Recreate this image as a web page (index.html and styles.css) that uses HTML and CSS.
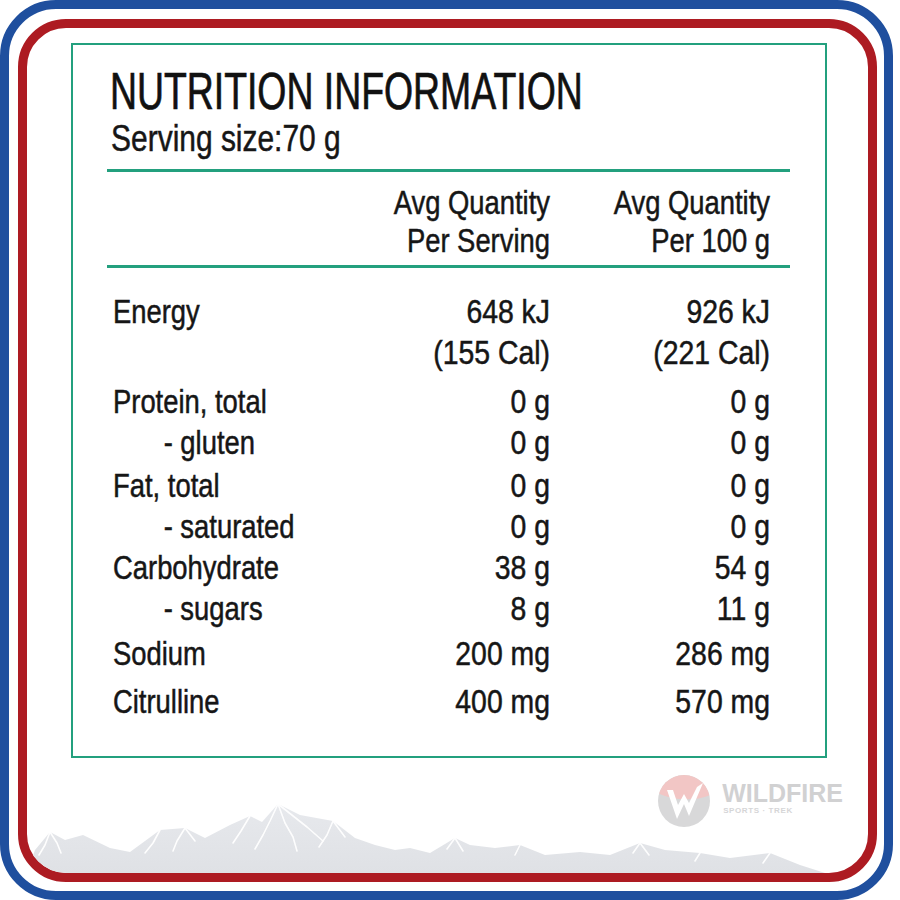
FILE: index.html
```html
<!DOCTYPE html>
<html lang="en">
<head>
<meta charset="utf-8">
<title>Nutrition Information</title>
<link rel="stylesheet" href="styles.css">
</head>
<body>
<div class="frame-blue">
  <div class="frame-red">
    <svg class="mountains" viewBox="0 0 841 80" preserveAspectRatio="none" aria-hidden="true">
      <defs>
        <linearGradient id="mg" x1="0" y1="0" x2="0" y2="1">
          <stop offset="0" stop-color="#e7e9ed"/>
          <stop offset="1" stop-color="#dfe1e5"/>
        </linearGradient>
      </defs>
      <path fill="url(#mg)" d="M0 80 L8 57 L23 39 L38 47 L56 42 L83 55 L103 59 L133 37 L158 35 L178 45 L203 32 L223 23 L235 29 L251 11 L273 22 L306 28 L328 45 L348 52 L368 57 L383 55 L403 60 L428 45 L443 52 L468 55 L493 52 L518 62 L553 59 L583 62 L613 50 L638 57 L673 60 L703 65 L743 60 L773 72 L798 80 Z"/>
      <g fill="none" stroke="#ffffff" stroke-width="1.6" stroke-linecap="round" stroke-linejoin="round" opacity="0.95">
        <path d="M23 39 L18 52 L12 62"/>
        <path d="M23 39 L30 50 L34 60"/>
        <path d="M133 37 L126 50 L118 60"/>
        <path d="M158 35 L150 48 L146 58"/>
        <path d="M158 35 L168 48"/>
        <path d="M223 23 L214 38 L206 50"/>
        <path d="M251 11 L243 28 L236 42 L228 56"/>
        <path d="M251 11 L258 30 L266 44 L270 58"/>
        <path d="M251 11 L280 34 L296 48"/>
        <path d="M306 28 L300 42 L292 54"/>
        <path d="M306 28 L318 44"/>
        <path d="M428 45 L420 56"/>
        <path d="M428 45 L436 58"/>
        <path d="M493 52 L488 62"/>
        <path d="M613 50 L606 60"/>
        <path d="M613 50 L622 62"/>
        <path d="M673 60 L668 68"/>
        <path d="M743 60 L736 70"/>
      </g>
    </svg>

    <section class="panel">
      <h1 class="title">NUTRITION INFORMATION</h1>
      <p class="serving">Serving size:70 g</p>

      <div class="table-head">
        <div></div>
        <div class="col-head">Avg Quantity<br>Per Serving</div>
        <div class="col-head">Avg Quantity<br>Per 100 g</div>
      </div>

      <div class="table-body">
        <div class="row">
          <div class="label">Energy</div>
          <div class="val">648 kJ<br>(155 Cal)</div>
          <div class="val">926 kJ<br>(221 Cal)</div>
        </div>
        <div class="row gap-8">
          <div class="label">Protein, total</div>
          <div class="val">0 g</div>
          <div class="val">0 g</div>
        </div>
        <div class="row">
          <div class="label sub">- gluten</div>
          <div class="val">0 g</div>
          <div class="val">0 g</div>
        </div>
        <div class="row gap-2">
          <div class="label">Fat, total</div>
          <div class="val">0 g</div>
          <div class="val">0 g</div>
        </div>
        <div class="row">
          <div class="label sub">- saturated</div>
          <div class="val">0 g</div>
          <div class="val">0 g</div>
        </div>
        <div class="row">
          <div class="label">Carbohydrate</div>
          <div class="val">38 g</div>
          <div class="val">54 g</div>
        </div>
        <div class="row">
          <div class="label sub">- sugars</div>
          <div class="val">8 g</div>
          <div class="val">11 g</div>
        </div>
        <div class="row gap-4">
          <div class="label">Sodium</div>
          <div class="val">200 mg</div>
          <div class="val">286 mg</div>
        </div>
        <div class="row gap-7">
          <div class="label">Citrulline</div>
          <div class="val">400 mg</div>
          <div class="val">570 mg</div>
        </div>
      </div>
    </section>

    <div class="brand-row">
      <div class="brand">
        <svg class="brand-mark" viewBox="0 0 52 52" aria-hidden="true">
          <defs>
            <clipPath id="bc"><circle cx="26" cy="26" r="26"/></clipPath>
          </defs>
          <g clip-path="url(#bc)">
            <rect x="0" y="0" width="52" height="52" fill="#d2d2d3"/>
            <path d="M0 0 H52 V20 C40 26 14 26 0 18 Z" fill="#f0bdbb"/>
            <path d="M9 15 L19 44 L26 29 L31 41 L45 8 L39 12 L31 28 L26 19 L20 30 L15 15 Z" fill="#ffffff"/>
          </g>
        </svg>
        <div class="brand-text">
          <span class="brand-name">WILDFIRE</span>
          <span class="brand-sub">SPORTS · TREK</span>
        </div>
      </div>
    </div>
  </div>
</div>
</body>
</html>
```

FILE: styles.css
```css
html, body {
  margin: 0;
  padding: 0;
  background: #ffffff;
}

body {
  font-family: "Liberation Sans", Arial, sans-serif;
  color: #161616;
}

.frame-blue {
  box-sizing: border-box;
  width: 893px;
  height: 900px;
  border: 9px solid #1f4f9e;
  border-radius: 56px;
  padding: 10px 7px 9px 9px;
  display: flex;
}

.frame-red {
  box-sizing: border-box;
  flex: 1;
  border: 9px solid #ad1b22;
  border-radius: 48px;
  padding: 15px 41px 0 44px;
  position: relative;
  overflow: hidden;
  display: flex;
  flex-direction: column;
}

.mountains {
  position: absolute;
  left: 0;
  bottom: 0;
  width: 841px;
  height: 80px;
  z-index: 0;
}

.panel {
  position: relative;
  z-index: 1;
  border: 2px solid #23a07e;
  padding: 20px 35px 34px 34px;
  background: #ffffff;
  -webkit-text-stroke: 0.5px #161616;
}

.title {
  margin: 0;
  padding-left: 4px;
  font-size: 51px;
  line-height: 54px;
  font-weight: normal;
  color: #111111;
  transform: scaleX(0.733);
  transform-origin: left center;
  white-space: nowrap;
  -webkit-text-stroke: 0.7px #111111;
}

.serving {
  margin: 0;
  padding-left: 5px;
  font-size: 36.5px;
  line-height: 40px;
  transform: scaleX(0.82);
  transform-origin: left center;
  white-space: nowrap;
}

.table-head {
  margin-top: 10px;
  border-top: 3px solid #23a07e;
  border-bottom: 3px solid #23a07e;
  padding: 12px 20px 5px 0;
  display: grid;
  grid-template-columns: 1fr 200px 220px;
}

.col-head {
  text-align: right;
  font-size: 33px;
  line-height: 38px;
  white-space: nowrap;
  transform: scaleX(0.83);
  transform-origin: right center;
}

.table-body {
  padding: 23px 20px 0 0;
}

.row {
  display: grid;
  grid-template-columns: 1fr 200px 220px;
  padding-left: 6px;
  font-size: 33px;
  line-height: 41px;
}

.gap-2 { margin-top: 2px; }
.gap-4 { margin-top: 4px; }
.gap-7 { margin-top: 7px; }
.gap-8 { margin-top: 8px; }

.label {
  white-space: nowrap;
  transform: scaleX(0.83);
  transform-origin: left center;
}

.label.sub {
  padding-left: 61px;
}

.val {
  text-align: right;
  white-space: nowrap;
  transform: scaleX(0.86);
  transform-origin: right center;
}

.brand-row {
  position: relative;
  z-index: 1;
  display: flex;
  justify-content: flex-end;
  margin-right: -16px;
  padding-top: 17px;
}

.brand {
  display: flex;
  align-items: center;
  gap: 12px;
  opacity: 0.85;
}

.brand-mark {
  width: 52px;
  height: 52px;
  display: block;
}

.brand-text {
  display: flex;
  flex-direction: column;
  margin-top: -6px;
}

.brand-name {
  font-weight: bold;
  font-size: 25px;
  line-height: 26px;
  color: #c9c9cb;
}

.brand-sub {
  font-weight: bold;
  font-size: 8px;
  line-height: 10px;
  color: #cfcfd1;
  letter-spacing: 0.6px;
  padding-left: 1px;
}
```
